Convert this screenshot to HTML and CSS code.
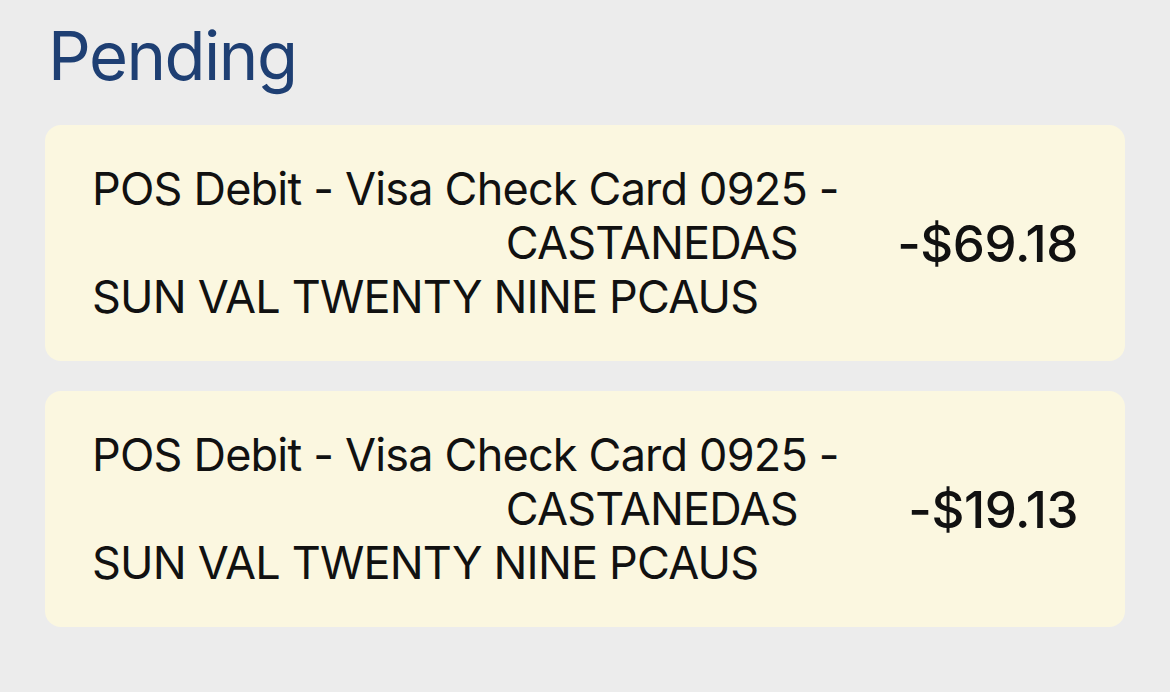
FILE: index.html
```html
<!DOCTYPE html>
<html>
<head>
<meta charset="utf-8">
<link rel="stylesheet" href="styles.css">
</head>
<body>
<main class="page">
  <h1 class="title">Pending</h1>
  <div class="list">
    <div class="card">
      <div class="desc">
        <span class="line">POS Debit - Visa Check Card 0925 -</span>
        <span class="line line-right">CASTANEDAS</span>
        <span class="line">SUN VAL TWENTY NINE PCAUS</span>
      </div>
      <div class="amount">-$69.18</div>
    </div>
    <div class="card">
      <div class="desc">
        <span class="line">POS Debit - Visa Check Card 0925 -</span>
        <span class="line line-right">CASTANEDAS</span>
        <span class="line">SUN VAL TWENTY NINE PCAUS</span>
      </div>
      <div class="amount">-$19.13</div>
    </div>
  </div>
</main>
</body>
</html>
```

FILE: styles.css
```css
html, body {
  margin: 0;
  padding: 0;
  background: #ececec;
}
body {
  font-family: Inter, "Noto Sans", sans-serif;
  color: #111111;
}
.page {
  padding: 14px 45px 0 45px;
}
.title {
  margin: 0 0 28px 3px;
  font-size: 67px;
  line-height: 83px;
  font-weight: 400;
  color: #1e3f73;
  letter-spacing: -1.5px;
}
.list {
  display: flex;
  flex-direction: column;
  gap: 30px;
}
.card {
  background: #fbf7e0;
  border-radius: 16px;
  padding: 37px 47px 37px 47px;
  display: flex;
  align-items: center;
  justify-content: space-between;
}
.desc {
  display: flex;
  flex-direction: column;
  align-items: flex-start;
  font-size: 45px;
  line-height: 54px;
  font-weight: 400;
  letter-spacing: -0.8px;
}
.line-right {
  align-self: flex-end;
  margin-right: 41px;
}
.amount {
  font-size: 51px;
  font-weight: 500;
  letter-spacing: -0.4px;
}
```
